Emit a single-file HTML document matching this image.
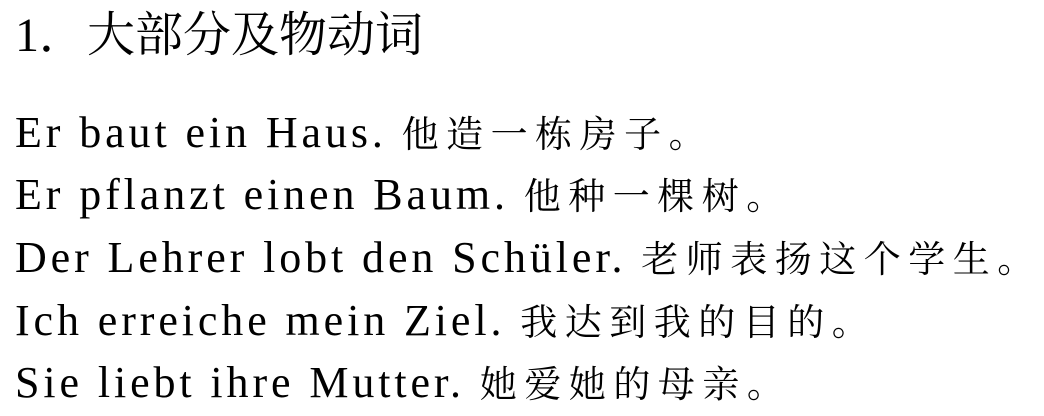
<!DOCTYPE html>
<html><head><meta charset="utf-8"><style>
html,body{margin:0;padding:0;background:#fff;width:1044px;height:416px;overflow:hidden}
.l{position:absolute;left:15px;white-space:nowrap;color:#000;font-family:"Liberation Serif","Noto Serif CJK SC",serif}
.t{font-size:48px;top:1px;line-height:70px}
.b{font-size:44px;letter-spacing:3.9px;line-height:50px}
.b .c{font-size:37px;letter-spacing:7.5px}
</style></head><body>
<div class="l t">1<span>．</span>大部分及物动词</div>
<div class="l b" style="top:108px">Er baut ein Haus. <span class="c">他造一栋房子。</span></div>
<div class="l b" style="top:170px">Er pflanzt einen Baum. <span class="c">他种一棵树。</span></div>
<div class="l b" style="top:233px">Der Lehrer lobt den Schüler. <span class="c">老师表扬这个学生。</span></div>
<div class="l b" style="top:296px">Ich erreiche mein Ziel. <span class="c">我达到我的目的。</span></div>
<div class="l b" style="top:358px">Sie liebt ihre Mutter. <span class="c">她爱她的母亲。</span></div>
</body></html>
